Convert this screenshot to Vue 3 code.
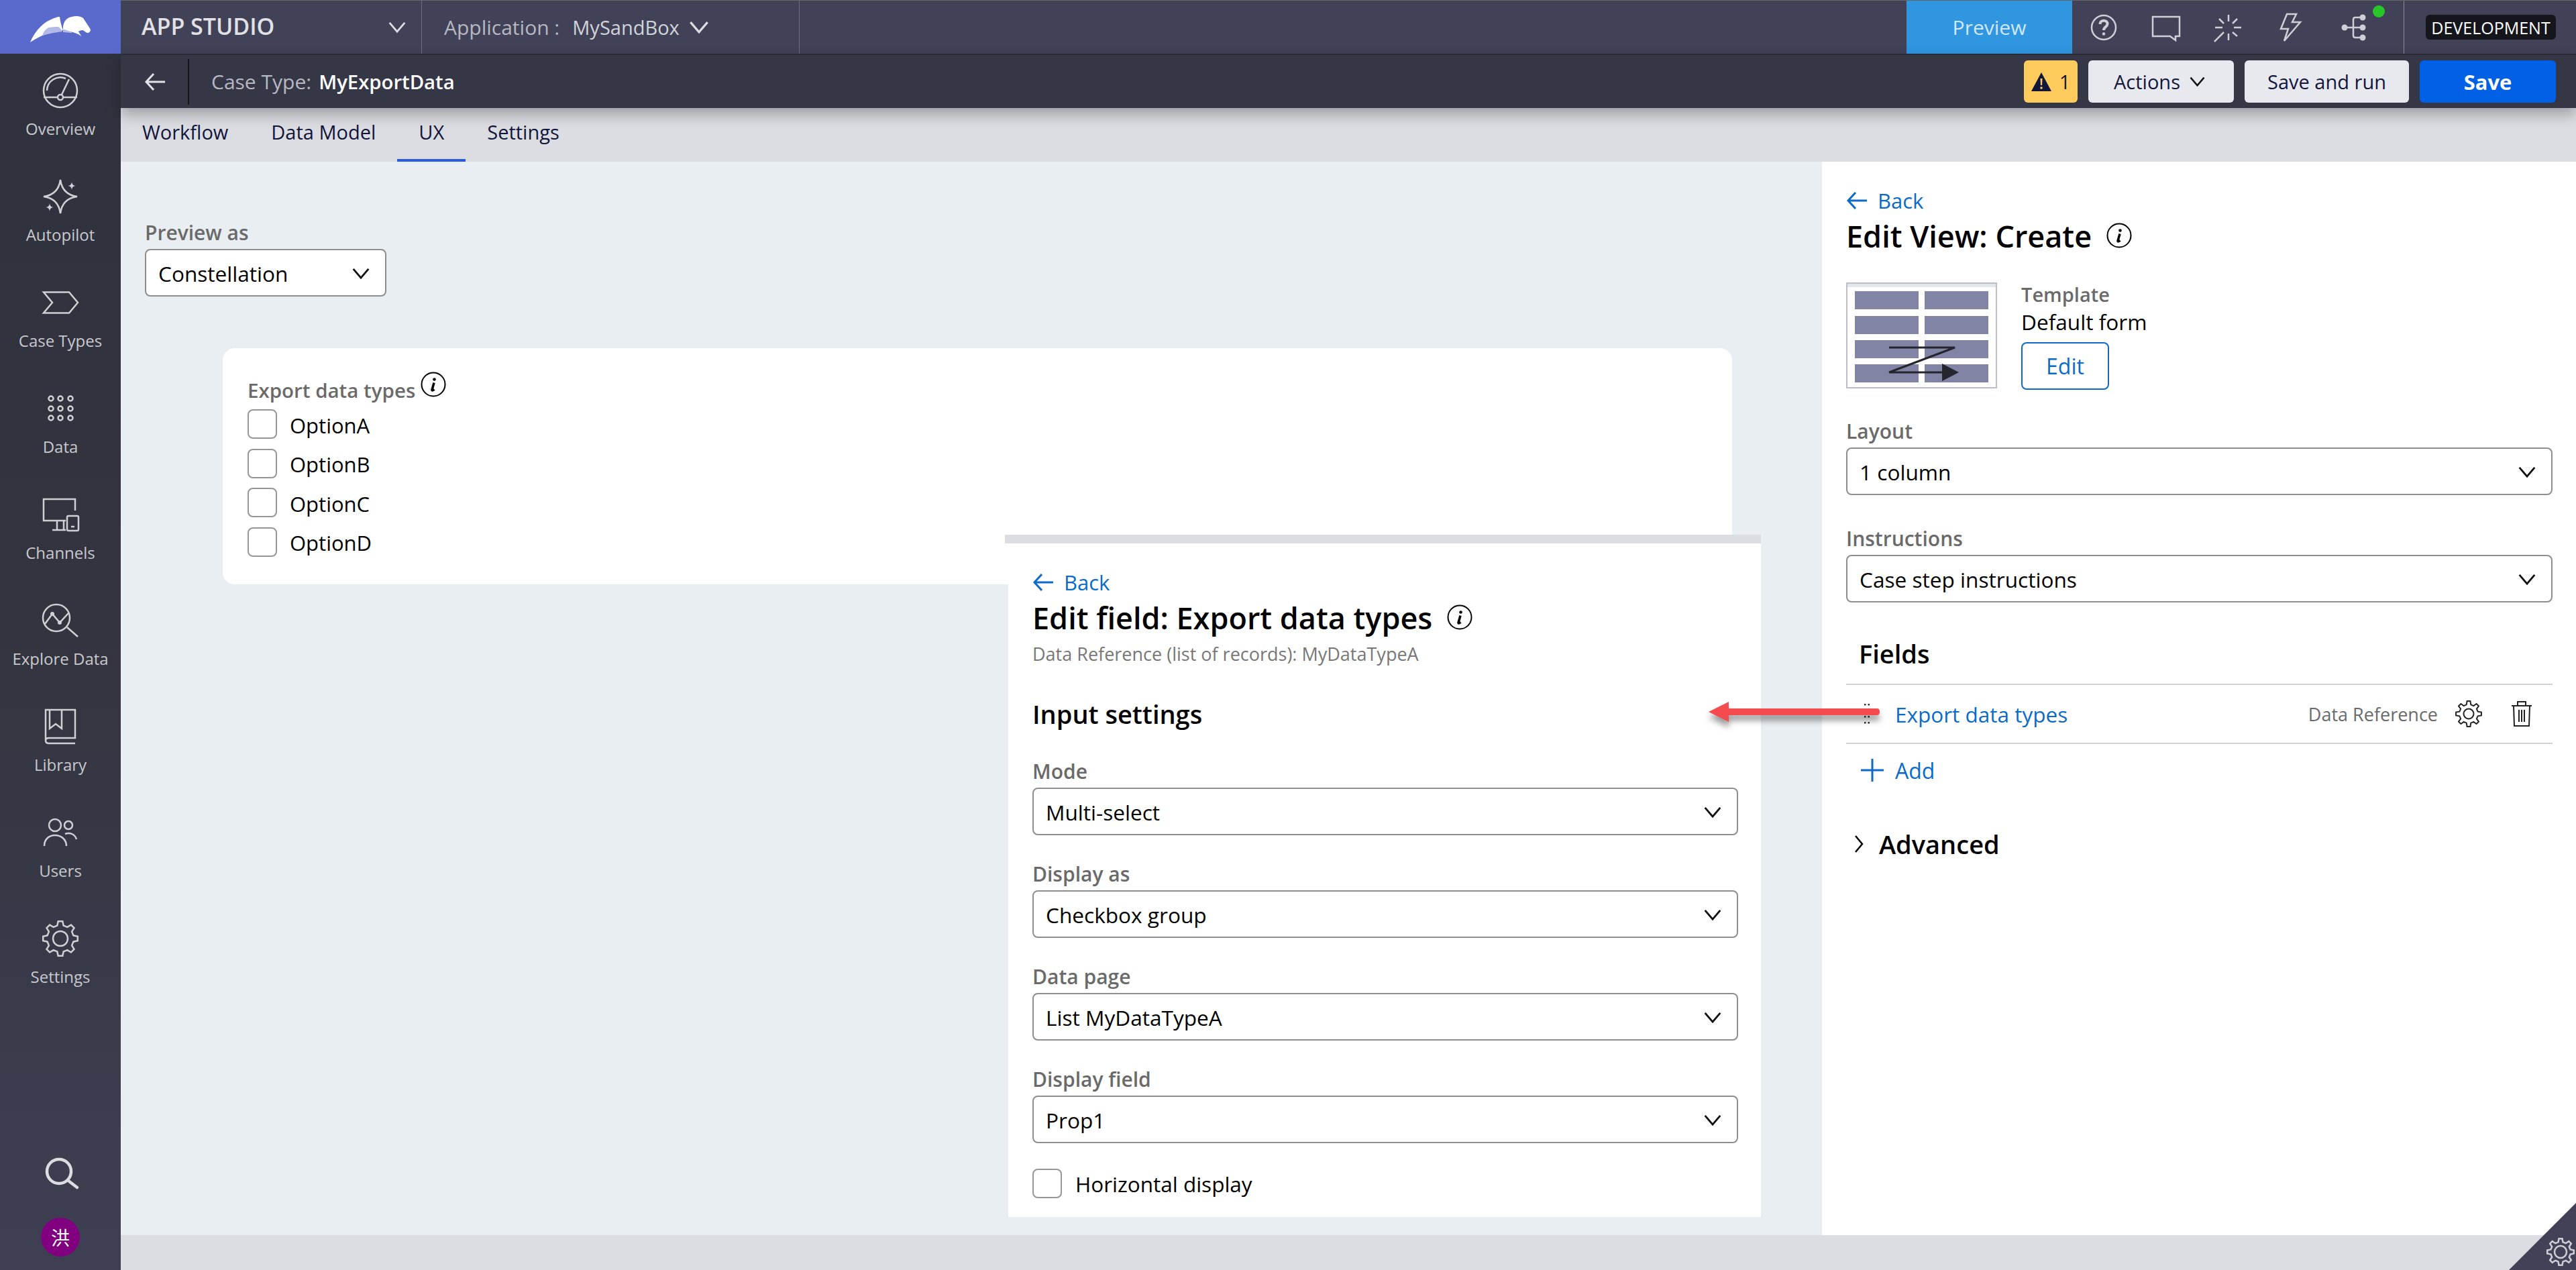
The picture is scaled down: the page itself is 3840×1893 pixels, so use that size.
<script setup>
const gearPath = (cx, cy, ro, ri, n) => {
  let d = ''
  const step = (Math.PI * 2) / n
  for (let i = 0; i < n; i++) {
    const a = i * step - Math.PI / 2
    const pts = [
      [ri, a - step * 0.3],
      [ro, a - step * 0.16],
      [ro, a + step * 0.16],
      [ri, a + step * 0.3]
    ]
    pts.forEach(([r, t], j) => {
      const x = (cx + r * Math.cos(t)).toFixed(1)
      const y = (cy + r * Math.sin(t)).toFixed(1)
      d += (i === 0 && j === 0 ? 'M' : 'L') + x + ' ' + y + ' '
    })
  }
  return d + 'Z'
}

const navGear = gearPath(30, 30, 26, 20, 8)
const smallGear = gearPath(22, 22, 20, 15, 8)
const fieldGear = gearPath(21, 21, 19, 14, 8)

const tabs = ['Workflow', 'Data Model', 'UX', 'Settings']
const options = ['OptionA', 'OptionB', 'OptionC', 'OptionD']
const fieldSettings = [
  { label: 'Mode', value: 'Multi-select' },
  { label: 'Display as', value: 'Checkbox group' },
  { label: 'Data page', value: 'List MyDataTypeA' },
  { label: 'Display field', value: 'Prop1' }
]
</script>

<template>
  <div class="app">
    <aside class="sidebar">
      <div class="logo">
        <svg viewBox="0 0 180 80" width="180" height="80">
          <path d="M45 63C51 49 61 36 74 30C80 27 86 25 89 25C90 33 92 40 94 45C84 47 73 49 63 53C56 56 50 60 45 63Z" fill="#fff" />
          <path d="M63 53C65 47 68 43 73 41C78 40 83 40 87 40C90 42 92 45 93 47C84 48 73 50 63 53Z" fill="#b4b9e6" />
          <path d="M94 42C94 36 96 31 100 28C104 25 110 24 114 24C118 24 121 25 124 27C128 33 132 39 135 44C135 47 133 49 130 49C127 48 125 45 123 45C120 45 118 46 117 47C118 49 120 51 121 54C116 50 110 48 104 47C101 46 97 45 94 44Z" fill="#fff" />
          <path d="M94 44C98 44 103 46 108 49C100 49 96 48 94 48Z" fill="#b4b9e6" />
        </svg>
      </div>
      <nav class="nav">
        <a class="nav-item">
          <svg class="nav-icon" viewBox="0 0 60 60">
            <circle cx="30" cy="30" r="25" />
            <path d="M5 40H26M34 40H55M32 36L43 13M10 30A20 20 0 0 1 38 12" />
            <circle cx="30" cy="40" r="4" />
          </svg>
          <span>Overview</span>
        </a>
        <a class="nav-item">
          <svg class="nav-icon" viewBox="0 0 60 60">
            <path d="M30 5C32 20 40 28 55 30C40 32 32 40 30 55C28 40 20 32 5 30C20 28 28 20 30 5Z" />
            <path class="solid" d="M47 8C47.600 12 49 13.500 53 14C49 14.500 47.600 16 47 20C46.400 16 45 14.500 41 14C45 13.500 46.400 12 47 8Z" />
            <path class="solid" d="M14 40C14.600 44 16 45.500 20 46C16 46.500 14.600 48 14 52C13.400 48 12 46.500 8 46C12 45.500 13.400 44 14 40Z" />
          </svg>
          <span>Autopilot</span>
        </a>
        <a class="nav-item">
          <svg class="nav-icon" viewBox="0 0 60 60">
            <path d="M5 14.500H43L56 30L43 45.500H5L18 30Z" />
          </svg>
          <span>Case Types</span>
        </a>
        <a class="nav-item">
          <svg class="nav-icon" viewBox="0 0 60 60">
            <circle cx="16" cy="15" r="3.500" /><circle cx="30" cy="15" r="3.500" /><circle cx="45" cy="15" r="3.500" />
            <circle cx="16" cy="30" r="3.500" /><circle cx="30" cy="30" r="3.500" /><circle cx="45" cy="30" r="3.500" />
            <circle cx="16" cy="44" r="3.500" /><circle cx="30" cy="44" r="3.500" /><circle cx="45" cy="44" r="3.500" />
          </svg>
          <span>Data</span>
        </a>
        <a class="nav-item">
          <svg class="nav-icon" viewBox="0 0 60 60">
            <path d="M52 24V7H5V39H38M25 39V53M35 39V53M18 53H38" />
            <rect x="40" y="32" width="17" height="22" rx="2" />
            <path d="M46 48H51" />
          </svg>
          <span>Channels</span>
        </a>
        <a class="nav-item">
          <svg class="nav-icon" viewBox="0 0 60 60">
            <circle cx="24" cy="26" r="20" />
            <path d="M40 40L56 54M7 35L18 20L29 33L42 19" />
            <circle class="solid" cx="18" cy="20" r="3" />
            <circle class="solid" cx="29" cy="33" r="3" />
          </svg>
          <span>Explore Data</span>
        </a>
        <a class="nav-item">
          <svg class="nav-icon" viewBox="0 0 60 60">
            <path d="M8 50V5H52V47H13C9 47 8 49 8 51C8 54 10 55 13 55H52M14 5V33L23 26L32 33V5" />
          </svg>
          <span>Library</span>
        </a>
        <a class="nav-item">
          <svg class="nav-icon" viewBox="0 0 60 60">
            <circle cx="22" cy="19" r="9" />
            <circle cx="42" cy="19" r="6" />
            <path d="M6 50C6 40 13 34 22 34C31 34 39 40 39 50M37 32C45 29 52 33 54 40" />
          </svg>
          <span>Users</span>
        </a>
        <a class="nav-item">
          <svg class="nav-icon" viewBox="0 0 60 60">
            <path :d="navGear" />
            <circle cx="30" cy="30" r="11" />
          </svg>
          <span>Settings</span>
        </a>
      </nav>
      <div class="side-bottom">
        <svg class="search-icon" viewBox="0 0 60 60">
          <circle cx="28" cy="27" r="18" />
          <path d="M42 41L55 51" />
        </svg>
        <div class="avatar">洪</div>
      </div>
    </aside>

    <main class="main">
      <header class="topbar">
        <div class="brand">
          <span>APP STUDIO</span>
          <svg class="chev light" viewBox="0 0 28 18"><path d="M2 2L14 16L26 2" /></svg>
        </div>
        <div class="app-select">
          <span class="dim">Application :</span>
          <span class="app-name">MySandBox</span>
          <svg class="chev light" viewBox="0 0 28 18"><path d="M2 2L14 16L26 2" /></svg>
        </div>
        <div class="spacer"></div>
        <button class="preview-btn">Preview</button>
        <div class="top-icons">
          <svg class="top-icon" viewBox="0 0 48 48">
            <circle cx="24" cy="24" r="18" />
            <path class="thick" d="M18.500 19C18.500 12 29.500 12 29.500 18.500C29.500 23 24 23 24 28" />
            <circle class="solid" cx="24" cy="33.500" r="2.200" />
          </svg>
          <svg class="top-icon" viewBox="0 0 48 48">
            <path d="M4 8H44V37H38V43L30 37H4Z" />
          </svg>
          <svg class="top-icon" viewBox="0 0 48 48">
            <path d="M24 5V15M24 33V43M4 24H15M32 24H43M10 11L17 18M37 11L30 18M30 31L37 37M17 31L3 45" />
          </svg>
          <svg class="top-icon" viewBox="0 0 48 48">
            <path d="M18 4H32L26 16H38L14 44L20 26H9Z" />
          </svg>
          <div class="tree-wrap">
            <svg class="top-icon" viewBox="0 0 48 48">
              <path d="M11 24H38M38 9H27Q24 9 24 12V36Q24 39 27 39H38" />
              <circle class="solid" cx="11" cy="24" r="4.500" />
              <circle class="solid" cx="38" cy="9" r="4.500" />
              <circle class="solid" cx="38" cy="24" r="4.500" />
              <circle class="solid" cx="38" cy="39" r="4.500" />
            </svg>
            <span class="status-dot"></span>
          </div>
        </div>
        <div class="env">
          <span class="env-pill">DEVELOPMENT</span>
        </div>
      </header>

      <div class="subbar">
        <button class="sub-back">
          <svg viewBox="0 0 32 30" width="32" height="30"><path d="M14 3L3 15L14 27M3 15H31" /></svg>
        </button>
        <div class="case-title">
          <span class="dim">Case Type:</span>
          <strong>MyExportData</strong>
        </div>
        <div class="spacer"></div>
        <div class="sub-actions">
          <button class="btn alert">
            <svg viewBox="0 0 30 28" width="30" height="28">
              <path d="M15 0L30 28H0Z" fill="#12163a" />
              <path d="M13.500 9H16.500L16 19H14Z" fill="#ffcb5c" />
              <circle cx="15" cy="23" r="1.800" fill="#ffcb5c" />
            </svg>
            <span>1</span>
          </button>
          <button class="btn actions">
            Actions
            <svg class="chev dark" viewBox="0 0 28 18"><path d="M2 2L14 16L26 2" /></svg>
          </button>
          <button class="btn run">Save and run</button>
          <button class="btn save">Save</button>
        </div>
      </div>

      <div class="tabs">
        <a v-for="tab in tabs" :key="tab" class="tab" :class="{ active: tab === 'UX' }">{{ tab }}</a>
      </div>

      <div class="content">
        <section class="stage">
          <label class="field-label">Preview as</label>
          <div class="select preview-select">
            <span>Constellation</span>
            <svg class="chev dark" viewBox="0 0 28 18"><path d="M2 2L14 16L26 2" /></svg>
          </div>

          <div class="form-card">
            <div class="card-label">
              <span>Export data types</span>
              <svg class="info" viewBox="0 0 38 38">
                <circle cx="19" cy="19" r="17.500" />
                <path class="info-i" d="M20 16.500L17 27C16.800 28 18 28.500 20.500 26.500" />
                <circle class="info-dot" cx="20.500" cy="11.500" r="2.300" />
              </svg>
            </div>
            <div class="check-list">
              <div v-for="opt in options" :key="opt" class="check-row">
                <span class="checkbox"></span>
                <span>{{ opt }}</span>
              </div>
            </div>
          </div>

          <div class="field-panel">
            <div class="panel-band"></div>
            <div class="panel-body">
              <a class="back-link">
                <svg viewBox="0 0 32 30" width="32" height="30"><path d="M14 3L3 15L14 27M3 15H31" /></svg>
                Back
              </a>
              <div class="panel-title">
                <h2>Edit field: Export data types</h2>
                <svg class="info" viewBox="0 0 38 38">
                  <circle cx="19" cy="19" r="17.500" />
                  <path class="info-i" d="M20 16.500L17 27C16.800 28 18 28.500 20.500 26.500" />
                  <circle class="info-dot" cx="20.500" cy="11.500" r="2.300" />
                </svg>
              </div>
              <p class="panel-sub">Data Reference (list of records): MyDataTypeA</p>
              <h3 class="section-title">Input settings</h3>
              <div v-for="f in fieldSettings" :key="f.label" class="field">
                <label class="field-label">{{ f.label }}</label>
                <div class="select">
                  <span>{{ f.value }}</span>
                  <svg class="chev dark" viewBox="0 0 28 18"><path d="M2 2L14 16L26 2" /></svg>
                </div>
              </div>
              <div class="check-row horizontal">
                <span class="checkbox"></span>
                <span>Horizontal display</span>
              </div>
            </div>
          </div>
        </section>

        <aside class="view-panel">
          <a class="back-link">
            <svg viewBox="0 0 32 30" width="32" height="30"><path d="M14 3L3 15L14 27M3 15H31" /></svg>
            Back
          </a>
          <div class="panel-title">
            <h2>Edit View: Create</h2>
            <svg class="info" viewBox="0 0 38 38">
              <circle cx="19" cy="19" r="17.500" />
              <path class="info-i" d="M20 16.500L17 27C16.800 28 18 28.500 20.500 26.500" />
              <circle class="info-dot" cx="20.500" cy="11.500" r="2.300" />
            </svg>
          </div>
          <div class="template-row">
            <svg class="thumb" viewBox="0 0 225 158" width="225" height="158">
              <rect x="1" y="1" width="223" height="156" fill="#fff" stroke="#bcbec9" stroke-width="2" />
              <rect x="2" y="2" width="221" height="5" fill="#e5e6ea" />
              <g fill="#8284a6">
                <rect x="13" y="13" width="95" height="27" /><rect x="117" y="13" width="95" height="27" />
                <rect x="13" y="50" width="95" height="27" /><rect x="117" y="50" width="95" height="27" />
                <rect x="13" y="86" width="95" height="27" /><rect x="117" y="86" width="95" height="27" />
                <rect x="13" y="122" width="95" height="27" /><rect x="117" y="122" width="95" height="27" />
              </g>
              <path d="M64 97H162L64 134H144" fill="none" stroke="#24252e" stroke-width="3" />
              <path d="M143 121L168 134L143 147Z" fill="#24252e" />
            </svg>
            <div class="template-info">
              <span class="template-label">Template</span>
              <span class="template-name">Default form</span>
              <button class="edit-btn">Edit</button>
            </div>
          </div>
          <div class="field view-field">
            <label class="field-label">Layout</label>
            <div class="select">
              <span>1 column</span>
              <svg class="chev dark" viewBox="0 0 28 18"><path d="M2 2L14 16L26 2" /></svg>
            </div>
          </div>
          <div class="field view-field">
            <label class="field-label">Instructions</label>
            <div class="select">
              <span>Case step instructions</span>
              <svg class="chev dark" viewBox="0 0 28 18"><path d="M2 2L14 16L26 2" /></svg>
            </div>
          </div>
          <h3 class="fields-title">Fields</h3>
          <div class="field-row">
            <svg class="drag" viewBox="0 0 8 30" width="8" height="30">
              <g fill="#333">
                <rect x="0" y="0" width="2.500" height="2.500" /><rect x="5.500" y="0" width="2.500" height="2.500" />
                <rect x="0" y="9" width="2.500" height="2.500" /><rect x="5.500" y="9" width="2.500" height="2.500" />
                <rect x="0" y="18" width="2.500" height="2.500" /><rect x="5.500" y="18" width="2.500" height="2.500" />
                <rect x="0" y="27" width="2.500" height="2.500" /><rect x="5.500" y="27" width="2.500" height="2.500" />
              </g>
            </svg>
            <a class="field-link">Export data types</a>
            <span class="field-type">Data Reference</span>
            <svg class="row-icon gear" viewBox="0 0 42 42" width="42" height="42">
              <path :d="fieldGear" />
              <circle cx="21" cy="21" r="7.500" />
            </svg>
            <svg class="row-icon trash" viewBox="0 0 36 40" width="36" height="40">
              <path d="M3 8H33M12 8V2H24V8M6 8L7 38H29L30 8M14 14V32M18 14V32M22 14V32" />
            </svg>
          </div>
          <a class="add-link">
            <svg viewBox="0 0 34 34" width="34" height="34"><path d="M17 0V34M0 17H34" /></svg>
            Add
          </a>
          <div class="advanced">
            <svg viewBox="0 0 14 28" width="14" height="28"><path d="M2 2L12 14L2 26" /></svg>
            <span>Advanced</span>
          </div>
        </aside>
      </div>

      <footer class="footer"></footer>
    </main>

    <svg class="red-arrow" viewBox="0 0 270 50" width="270" height="50">
      <path d="M7 21L37 6V16H258Q262 16 262 21Q262 26 258 26H37V36Z" fill="#f54b4e" />
    </svg>

    <div class="corner">
      <svg viewBox="0 0 44 44" width="44" height="44">
        <path :d="smallGear" />
        <circle cx="22" cy="22" r="9" />
      </svg>
    </div>
  </div>
</template>

<style>
html, body {
  margin: 0;
  height: 100%;
  overflow: hidden;
}
</style>

<style scoped>
.app {
  position: relative;
  display: flex;
  width: 3840px;
  height: 1893px;
  overflow: hidden;
  font-family: "Open Sans", "Noto Sans", sans-serif;
  font-size: 32px;
  color: #000;
  background: #e9eef2;
}

button {
  font-family: inherit;
  border: none;
  padding: 0;
  background: none;
}

h2, h3, p {
  margin: 0;
}

/* sidebar */
.sidebar {
  width: 180px;
  flex-shrink: 0;
  display: flex;
  flex-direction: column;
  background: linear-gradient(180deg, #2f313e 0%, #33343f 50%, #3e3f52 100%);
}

.logo {
  height: 80px;
  background: #5a69cc;
}

.logo svg {
  display: block;
}

.nav {
  display: flex;
  flex-direction: column;
}

.nav-item {
  height: 158px;
  box-sizing: border-box;
  padding-top: 25px;
  display: flex;
  flex-direction: column;
  align-items: center;
  gap: 11px;
  color: #c8c9ce;
  font-size: 24px;
  line-height: 32px;
}

.nav-icon {
  width: 60px;
  height: 60px;
  fill: none;
  stroke: #cfd0d4;
  stroke-width: 2.500;
}

.nav-icon .solid {
  fill: #cfd0d4;
  stroke: none;
}

.side-bottom {
  margin-top: auto;
  display: flex;
  flex-direction: column;
  align-items: center;
  padding-bottom: 20px;
  gap: 36px;
}

.search-icon {
  width: 60px;
  height: 60px;
  fill: none;
  stroke: #dcdde0;
  stroke-width: 4.500;
  stroke-linecap: round;
}

.avatar {
  width: 58px;
  height: 58px;
  border-radius: 50%;
  background: #800080;
  color: #fff;
  font-family: "Noto Sans CJK SC", sans-serif;
  font-size: 28px;
  display: flex;
  align-items: center;
  justify-content: center;
}

/* top */
.main {
  flex: 1;
  min-width: 0;
  display: flex;
  flex-direction: column;
}

.topbar {
  height: 80px;
  box-sizing: border-box;
  border-top: 1px solid #666;
  display: flex;
  align-items: stretch;
  background: #414258;
  color: #e2e2e6;
}

.brand {
  width: 449px;
  box-sizing: border-box;
  padding: 0 22px 0 31px;
  display: flex;
  align-items: center;
  justify-content: space-between;
  border-right: 1px solid #6c6d7e;
  font-size: 34px;
  font-weight: 600;
}

.brand span {
  padding-bottom: 3px;
}

.app-select {
  width: 563px;
  box-sizing: border-box;
  padding-left: 33px;
  display: flex;
  align-items: center;
  border-right: 1px solid #6c6d7e;
  font-size: 30px;
}

.dim {
  color: #b7b8c2;
}

.app-name {
  margin-left: 19px;
  font-size: 29px;
  color: #d2d3d9;
}

.app-select .chev {
  margin-left: 14px;
  width: 30px;
  height: 19px;
}

.spacer {
  flex: 1;
}

.chev {
  width: 28px;
  height: 17px;
  flex-shrink: 0;
  fill: none;
  stroke-width: 3;
}

.chev.light {
  stroke: #dcdde0;
}

.chev.dark {
  stroke: #111;
}

.preview-btn {
  width: 247px;
  background: #3096e0;
  color: #cfe9fb;
  font-size: 30px;
}

.top-icons {
  display: flex;
  align-items: center;
  gap: 45px;
  padding: 0 51px 0 23px;
}

.top-icon {
  display: block;
  width: 48px;
  height: 48px;
  fill: none;
  stroke: #cfd0d5;
  stroke-width: 2.500;
}

.top-icon .solid {
  fill: #cfd0d5;
  stroke: none;
}

.top-icon .thick {
  stroke-width: 4;
}

.tree-wrap {
  position: relative;
}

.status-dot {
  position: absolute;
  left: 53px;
  top: -9px;
  width: 18px;
  height: 18px;
  border-radius: 50%;
  background: #29c62a;
}

.env {
  width: 257px;
  box-sizing: border-box;
  border-left: 1px solid #8a8b99;
  padding-left: 32px;
  display: flex;
  align-items: center;
}

.env-pill {
  width: 194px;
  height: 37px;
  border-radius: 6px;
  background: #15151c;
  color: #fff;
  font-size: 25px;
  display: flex;
  align-items: center;
  justify-content: center;
}

.subbar {
  position: relative;
  z-index: 2;
  height: 81px;
  box-sizing: border-box;
  border-top: 2px solid #2b2c38;
  display: flex;
  align-items: center;
  background: #353646;
  box-shadow: 0 10px 20px rgba(0, 0, 0, 0.28);
}

.sub-back {
  width: 102px;
  height: 68px;
  box-sizing: border-box;
  padding-left: 35px;
  text-align: left;
  border-right: 2px solid #14141c;
}

.sub-back svg {
  display: block;
  fill: none;
  stroke: #e2e2e6;
  stroke-width: 3;
}

.case-title {
  margin-left: 33px;
  font-size: 30px;
  display: flex;
  align-items: baseline;
  gap: 11px;
}

.case-title strong {
  color: #fff;
  font-size: 29.300px;
  font-weight: 600;
}

.sub-actions {
  display: flex;
  gap: 16px;
  margin-right: 30px;
}

.btn {
  height: 63px;
  border-radius: 6px;
  font-size: 29px;
  display: flex;
  align-items: center;
  justify-content: center;
  color: #12163a;
  background: #e8e9ef;
}

.alert {
  width: 80px;
  gap: 12px;
  background: #ffcb5c;
}

.actions {
  width: 217px;
  gap: 13px;
  padding-right: 4px;
  box-sizing: border-box;
}

.actions .chev {
  width: 25px;
  height: 15px;
}

.run {
  width: 245px;
}

.save {
  width: 203px;
  color: #fff;
  background: #0060e6;
  font-size: 31px;
  font-weight: 700;
}

.tabs {
  height: 80px;
  flex-shrink: 0;
  display: flex;
  background: #dcdde2;
}

.tab {
  height: 80px;
  box-sizing: border-box;
  padding: 0 32px;
  line-height: 72px;
  font-size: 29px;
  color: #12163a;
}

.tab.active {
  border-bottom: 4px solid #2a59ea;
}

/* content */
.content {
  flex: 1;
  min-height: 0;
  display: flex;
}

.stage {
  position: relative;
  flex: 1;
  min-width: 0;
  box-sizing: border-box;
  padding: 87px 134px 0 36px;
}

.field-label {
  display: block;
  height: 40px;
  line-height: 38px;
  font-size: 30px;
  font-weight: 600;
  color: #6a6a6a;
}

.select {
  height: 71px;
  box-sizing: border-box;
  margin-top: 3px;
  padding: 2px 22px 0 18px;
  display: flex;
  align-items: center;
  justify-content: space-between;
  background: #fff;
  border: 2.500px solid #8e8e8e;
  border-radius: 8px;
  font-size: 31.600px;
}

.preview-select {
  width: 360px;
}

.form-card {
  margin: 77px 0 0 116px;
  padding: 42px 37px 41px;
  background: #fff;
  border-radius: 18px;
}

.card-label {
  display: flex;
  align-items: center;
  gap: 8px;
  height: 40px;
  font-size: 29.500px;
  font-weight: 600;
  color: #6a6a6a;
}

.card-label .info {
  margin-bottom: 16px;
}

.info {
  width: 38px;
  height: 38px;
  flex-shrink: 0;
  fill: none;
  stroke: #000;
}

.info circle:first-child {
  stroke-width: 2;
}

.info-i {
  stroke-width: 3.500;
}

.info-dot {
  fill: #000;
  stroke: none;
}

.check-list {
  margin-top: 9px;
  display: flex;
  flex-direction: column;
  gap: 14.500px;
}

.check-list .check-row {
  gap: 19px;
  font-size: 31px;
}

.check-list .check-row span:last-child {
  padding-top: 3px;
}

.check-row {
  display: flex;
  align-items: center;
  gap: 20px;
  height: 44px;
  font-size: 31.500px;
}

.checkbox {
  width: 44px;
  height: 44px;
  box-sizing: border-box;
  border: 2.500px solid #969696;
  border-radius: 8px;
  background: #fff;
}

.field-panel {
  position: absolute;
  left: 1318px;
  top: 556px;
  width: 1127px;
}

.panel-band {
  height: 13px;
  background: #dcdde2;
}

.panel-body {
  margin-left: 5px;
  height: 1004px;
  box-sizing: border-box;
  padding: 38px 34px 0 36px;
  background: #fff;
}

.back-link {
  display: flex;
  align-items: center;
  gap: 15px;
  height: 40px;
  font-size: 31px;
  color: #0b6bcb;
}

.back-link svg {
  fill: none;
  stroke: #0b6bcb;
  stroke-width: 3;
}

.panel-title {
  margin-top: 6px;
  height: 52px;
  display: flex;
  align-items: center;
  gap: 22px;
}

.panel-title h2 {
  font-size: 45px;
  font-weight: 600;
}

.panel-sub {
  margin-top: 11px;
  height: 36px;
  line-height: 36px;
  font-size: 27px;
  color: #777;
}

.section-title {
  margin-top: 49px;
  height: 50px;
  line-height: 44px;
  font-size: 38px;
  font-weight: 600;
}

.field {
  margin-top: 39px;
}

.horizontal {
  margin-top: 38px;
}

/* right panel */
.view-panel {
  width: 1124px;
  flex-shrink: 0;
  box-sizing: border-box;
  padding: 38px 35px 0 36px;
  background: #fff;
}

.template-row {
  margin-top: 44px;
  display: flex;
  gap: 36px;
}

.thumb {
  display: block;
  flex-shrink: 0;
}

.template-info {
  display: flex;
  flex-direction: column;
  align-items: flex-start;
}

.template-label {
  height: 38px;
  line-height: 36px;
  font-size: 29px;
  font-weight: 600;
  color: #6a6a6a;
}

.template-name {
  height: 44px;
  line-height: 42px;
  font-size: 31.600px;
}

.edit-btn {
  margin-top: 7px;
  width: 131px;
  height: 71px;
  box-sizing: border-box;
  border: 2.500px solid #0b6bcb;
  border-radius: 8px;
  color: #0b6bcb;
  font-size: 32px;
}

.view-field {
  margin-top: 43px;
}

.view-field + .view-field {
  margin-top: 46px;
}

.fields-title {
  margin-top: 53px;
  padding-left: 19px;
  height: 50px;
  line-height: 46px;
  font-size: 38px;
  font-weight: 600;
}

.field-row {
  margin-top: 18px;
  height: 90px;
  box-sizing: border-box;
  border-top: 2.500px solid #d2d2d2;
  border-bottom: 2.500px solid #d2d2d2;
  display: flex;
  align-items: center;
  padding-left: 27px;
}

.drag {
  flex-shrink: 0;
}

.field-link {
  margin-left: 38px;
  color: #0b6bcb;
  font-size: 31.500px;
}

.field-type {
  margin-left: auto;
  color: #6a6a6a;
  font-size: 27px;
}

.row-icon {
  fill: none;
  stroke: #222;
  stroke-width: 2;
  flex-shrink: 0;
}

.gear {
  margin-left: 25px;
}

.trash {
  margin: 0 28px 0 40px;
}

.add-link {
  margin-top: 19px;
  height: 40px;
  display: flex;
  align-items: center;
  gap: 17px;
  padding-left: 22px;
  color: #0b6bcb;
  font-size: 32px;
}

.add-link svg {
  fill: none;
  stroke: #0b6bcb;
  stroke-width: 3;
}

.advanced {
  margin-top: 65px;
  height: 50px;
  display: flex;
  align-items: center;
  gap: 23px;
  padding-left: 12px;
  font-size: 38px;
  font-weight: 600;
}

.advanced svg {
  fill: none;
  stroke: #000;
  stroke-width: 2.500;
}

.footer {
  height: 52px;
  flex-shrink: 0;
  background: #dcdde2;
}

/* overlays */
.red-arrow {
  position: absolute;
  left: 2540px;
  top: 1040px;
  filter: drop-shadow(0 8px 5px rgba(0, 0, 0, 0.4));
}

.corner {
  position: absolute;
  right: 0;
  bottom: 0;
  width: 100px;
  height: 100px;
  clip-path: polygon(100% 0, 100% 100%, 0 100%);
  background: #414258;
}

.corner svg {
  position: absolute;
  left: 55px;
  top: 51px;
  fill: none;
  stroke: #cfd0d5;
  stroke-width: 2.500;
}
</style>
